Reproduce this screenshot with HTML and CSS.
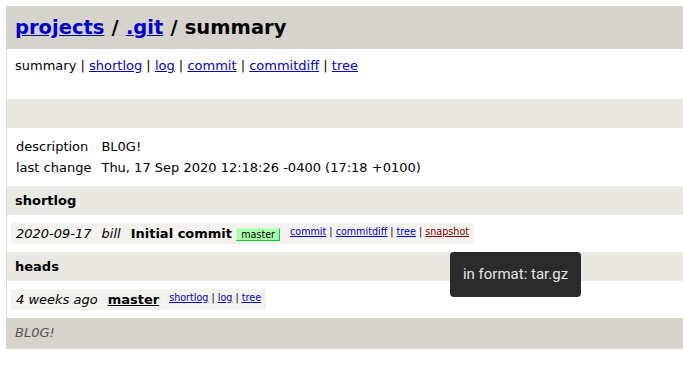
FILE: index.html
```html
<!DOCTYPE html>
<html lang="en">
<head>
    <meta charset="UTF-8">
    <title>.git - summary</title>
    <link rel="stylesheet" href="styles.css">
</head>
<body>
    <div class="page_header">
        <a href="#">projects</a> / <a href="#">.git</a> / summary
    </div>
    <div class="page_nav">
        summary | <a href="#">shortlog</a> | <a href="#">log</a> | <a href="#">commit</a> | <a href="#">commitdiff</a> | <a href="#">tree</a><br><br>
    </div>
    <div class="title">&nbsp;</div>
    <table class="projects_list">
        <tr><td>description</td><td>BL0G!</td></tr>
        <tr><td>last change</td><td>Thu, 17 Sep 2020 12:18:26 -0400 (17:18 +0100)</td></tr>
    </table>
    <div class="header"><a class="title" href="#">shortlog</a></div>
    <table class="shortlog">
        <tr class="dark">
            <td><i>2020-09-17</i></td>
            <td class="author"><i>bill</i></td>
            <td><a class="list subject" href="#"><b>Initial commit</b></a> <span class="refs"><span class="head"><a href="#">master</a></span></span></td>
            <td class="link"><a href="#">commit</a> | <a href="#">commitdiff</a> | <a href="#">tree</a> | <a class="hover" href="#">snapshot</a></td>
        </tr>
    </table>
    <div class="header"><a class="title" href="#">heads</a></div>
    <table class="heads">
        <tr class="dark">
            <td><i>4 weeks ago</i></td>
            <td class="current_head"><a class="list name" href="#"><b>master</b></a></td>
            <td class="link"><a href="#">shortlog</a> | <a href="#">log</a> | <a href="#">tree</a></td>
        </tr>
    </table>
    <div class="page_footer">
        <div class="page_footer_text">BL0G!</div>
    </div>
    <div class="tooltip">in format: tar.gz</div>
</body>
</html>
```

FILE: styles.css
```css
html { background: #ffffff; }
body { font-family: "DejaVu Sans", sans-serif; font-size: 13px; line-height: 17px; margin: 6px 0 0 6px; border: 1px solid #d9d8d1; border-right: 0; background: #ffffff; color: #000000; }
a { color: #0000cc; }
a:hover, a:visited, a:active { color: #880000; }
.page_header { height: 26px; padding: 8px; font-size: 150%; line-height: 26px; font-weight: bold; background: #d6d3cc; word-spacing: 0.4px; }
.page_header a { color: #0000cc; }
.page_nav { padding: 8px; }
.title, a.title { display: block; padding: 6px 8px; font-weight: bold; background: #e9e8e3; text-decoration: none; color: #000000; }
table { padding: 8px 4px; border-spacing: 0; }
td { padding: 2px 5px; height: 17px; vertical-align: top; white-space: nowrap; }
tr.dark { background: #f3f2ee; }
td.link { font-size: 9.6px; line-height: 12px; padding-top: 3px; padding-bottom: 1px; }
td.link a.hover { color: #880000; }
a.list { text-decoration: none; color: #000000; }
td.current_head a.list { text-decoration: underline; }
span.refs span { padding: 0 4px; font-size: 9.6px; line-height: 10px; font-weight: normal; border: 1px solid; }
span.refs span.head { background: #aaffaa; border-color: #ccffcc #00cc33 #00cc33 #ccffcc; }
span.refs a { text-decoration: none; color: inherit; }
.page_footer { height: 22px; padding: 4px 8px; background: #d6d3cc; }
.page_footer_text { line-height: 22px; float: left; color: #555555; font-style: italic; }
.tooltip { position: absolute; left: 450px; top: 252px; width: 131px; height: 45px; box-sizing: border-box; border-radius: 4px; background: #2b2b2b; color: #e6e6e6; font-family: Roboto, sans-serif; font-size: 15px; line-height: 45px; text-align: center; }
```
